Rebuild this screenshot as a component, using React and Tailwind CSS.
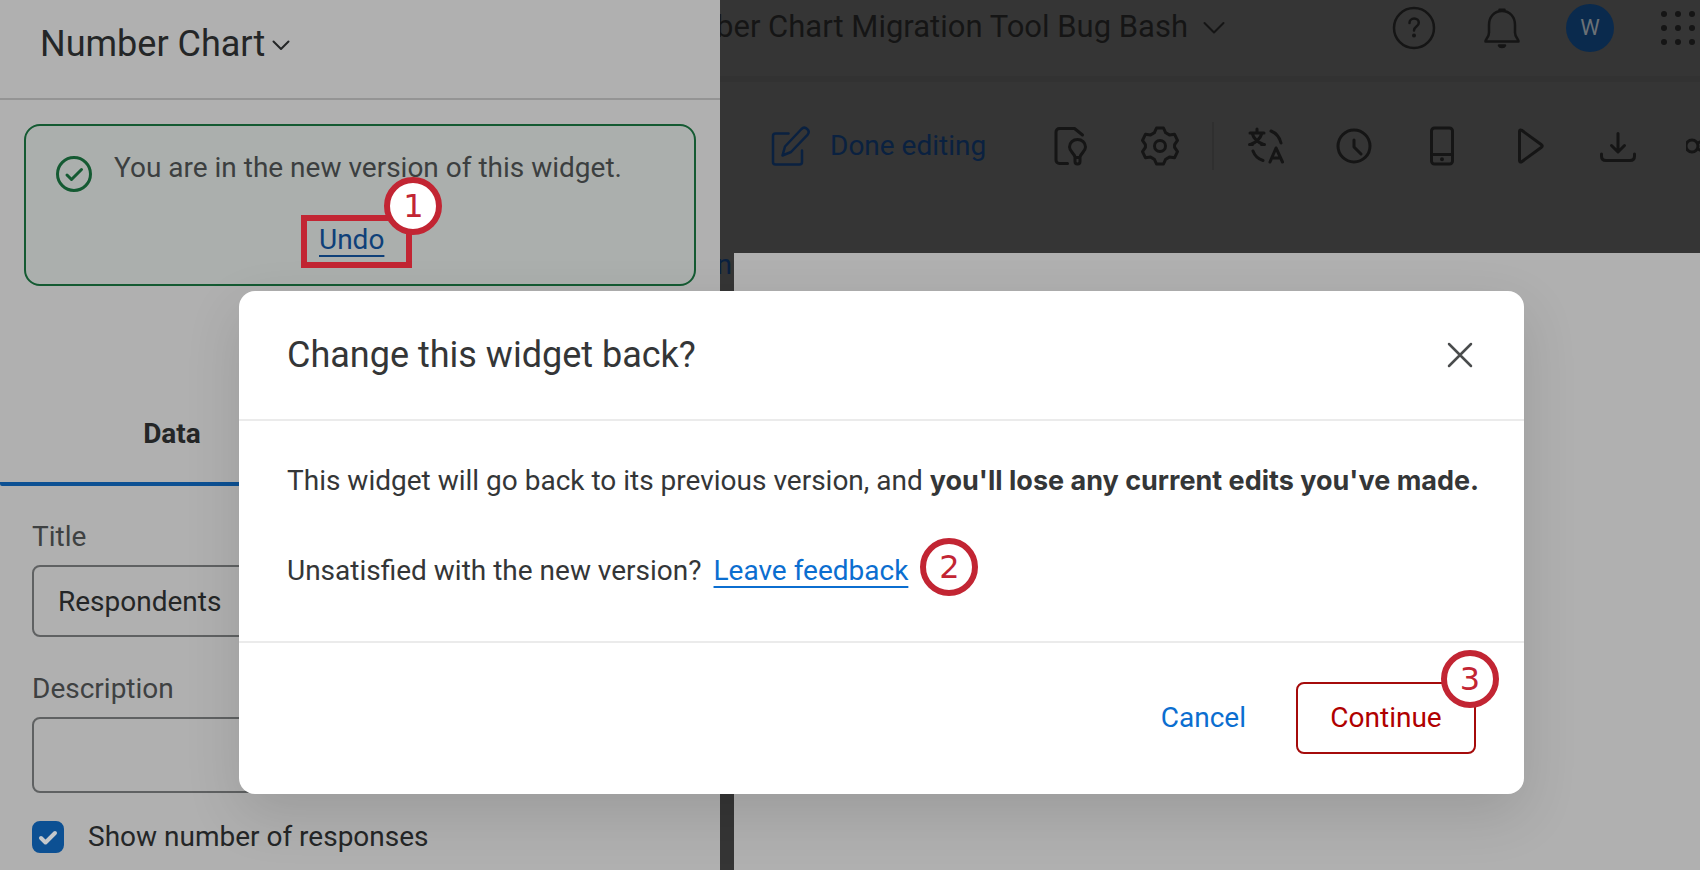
import React, { useState } from 'react';

const Icon = ({ size = 40, width = 3, className = '', children }) => (
  <svg
    width={size}
    height={size}
    viewBox={`0 0 ${size} ${size}`}
    fill="none"
    stroke="currentColor"
    strokeWidth={width}
    strokeLinecap="round"
    strokeLinejoin="round"
    aria-hidden="true"
    className={`shrink-0 ${className}`}
  >
    {children}
  </svg>
);

const Marker = ({ number, className }) => (
  <span
    className={`flex h-[58px] w-[58px] items-center justify-center rounded-full border-6 border-[#c22533] bg-white font-['DejaVu_Sans',sans-serif] text-[32px] leading-none text-[#c22533] ${className}`}
  >
    {number}
  </span>
);

const tools = [
  {
    label: 'Translate',
    icon: (
      <>
        <path d="M4 7h14M11 3v4M6 7c1.500 5 6 9.500 11.500 11.500M16 7c-1.500 5-6 9.500-11.500 11.500M3.500 18.500h3M15.500 18.500h3" />
        <path d="M25 5c5 2 8.500 6 10 12M7 25c1.500 4 5 8 10 9.500M24 36l6-14 6.500 14M26.500 32h8" />
      </>
    ),
  },
  {
    label: 'History',
    icon: (
      <>
        <circle cx="20" cy="20" r="16" />
        <path d="M20 14v7l7 7" />
      </>
    ),
  },
  {
    label: 'Mobile preview',
    icon: (
      <>
        <rect x="9.5" y="2" width="21" height="36" rx="3" />
        <path d="M10 28.500h20" />
        <circle cx="20" cy="33.3" r="1.2" fill="currentColor" strokeWidth="1.5" />
      </>
    ),
  },
  {
    label: 'Preview',
    icon: <path d="M9.500 5.500v29c0 1.500 1 2 2.200 1.200L31.500 21.200c1-.8 1-1.600 0-2.400L11.700 4.300c-1.200-.8-2.200-.3-2.200 1.200z" />,
  },
  {
    label: 'Download',
    icon: <path d="M20 7.500v18M13.500 19.500l6.500 6.500 6.500-6.500M3.500 28v2c0 3 1.500 4.500 4.500 4.500h24c3 0 4.500-1.500 4.500-4.500v-2" />,
  },
  {
    label: 'Share',
    icon: (
      <>
        <circle cx="6" cy="20" r="6" />
        <path d="M12 17l16-9M12 23l16 9" />
      </>
    ),
  },
];

const ToolButton = ({ label, children }) => (
  <button type="button" aria-label={label} className="flex h-12 w-12 shrink-0 items-center justify-center">
    <Icon>{children}</Icon>
  </button>
);

const WidgetPanel = () => {
  const [title, setTitle] = useState('Respondents');
  const [description, setDescription] = useState('');
  const [showCount, setShowCount] = useState(true);

  return (
    <aside className="w-[720px] shrink-0 overflow-hidden bg-[#b0b0b0] text-[#242627]">
      <header className="flex h-[100px] items-center border-b-2 border-[#949494] pb-2.5 pl-10">
        <button type="button" className="flex items-center gap-1.5 text-[36px]">
          Number Chart
          <Icon size={20} width={2} className="mt-0.5">
            <path d="M2.500 6.500l7.500 7.500 7.500-7.500" />
          </Icon>
        </button>
      </header>

      {/* Version notice */}
      <div className="mx-6 mt-6 flex gap-[22px] rounded-2xl border-2 border-[#145a32] bg-[#abafad] pt-[22px] pr-6 pb-6 pl-[30px]">
        <Icon size={36} className="mt-2 text-[#145a32]">
          <circle cx="18" cy="18" r="16.5" />
          <path d="M11 19l4.500 4.500L25.500 13.500" />
        </Icon>
        <div className="flex-1">
          <p className="text-[#3c3f40]">You are in the new version of this widget.</p>
          <div className="mt-8 pl-[205px]">
            <a
              href="#undo"
              className="relative inline-block text-[#0e4079] underline decoration-2 underline-offset-[6px] [text-decoration-skip-ink:none]"
            >
              Undo
              <span className="absolute -top-[5px] -right-7 -bottom-2 -left-[18px] border-6 border-[#c22533]">
                <Marker number={1} className="absolute -top-11 -right-9" />
              </span>
            </a>
          </div>
        </div>
      </div>

      <div role="tablist" className="mt-24 flex">
        <button
          type="button"
          role="tab"
          aria-selected="true"
          className="h-[104px] w-[344px] rounded-b-xs border-b-4 border-[#0c5093] pt-1 font-bold"
        >
          Data
        </button>
      </div>

      <form className="px-8 pt-[31px]">
        <label htmlFor="widget-title" className="mb-2 block text-[#3e4142]">Title</label>
        <input
          id="widget-title"
          type="text"
          value={title}
          onChange={(e) => setTitle(e.target.value)}
          className="mb-8 block h-[72px] w-full rounded-lg border-2 border-[#5f6162] px-6"
        />
        <label htmlFor="widget-description" className="mb-2 block text-[#3e4142]">Description</label>
        <input
          id="widget-description"
          type="text"
          value={description}
          onChange={(e) => setDescription(e.target.value)}
          className="mb-6 block h-[76px] w-full rounded-lg border-2 border-[#5f6162] px-6"
        />
        <label htmlFor="show-count" className="flex items-center gap-6">
          <span className="grid h-8 w-8 place-items-center">
            <input
              id="show-count"
              type="checkbox"
              checked={showCount}
              onChange={(e) => setShowCount(e.target.checked)}
              className="col-start-1 row-start-1 h-8 w-8 appearance-none rounded-lg border-2 border-[#5f6162] checked:border-[#0c5093] checked:bg-[#0c5093]"
            />
            {showCount && (
              <Icon size={20} width={4} className="pointer-events-none col-start-1 row-start-1 text-[#c4c8cc]">
                <path d="M3 11l4.500 4.500L17 6" />
              </Icon>
            )}
          </span>
          Show number of responses
        </label>
      </form>
    </aside>
  );
};

const Workspace = () => (
  <main className="flex min-w-0 flex-1 flex-col overflow-hidden bg-[#353535] text-[#151515]">
    <header className="flex h-[82px] shrink-0 items-start justify-between border-b-6 border-[#323232]">
      <button type="button" className="flex h-[54px] w-[506px] shrink-0 items-center justify-end gap-3.5 overflow-hidden text-[31px] whitespace-nowrap">
        Number Chart Migration Tool Bug Bash
        <Icon size={24} width={2}>
          <path d="M2.500 8l9.500 9.500L21.500 8" />
        </Icon>
      </button>
      <div className="flex h-14 shrink-0 items-center gap-10 pr-0.5">
        <button type="button" aria-label="Help" className="flex w-12 justify-center">
          <Icon size={44} width={2.5}>
            <circle cx="22" cy="22" r="20" />
            <path d="M17.500 17c0-2.500 2-4.500 4.700-4.500 2.600 0 4.600 1.800 4.600 4.300 0 4-4.800 3.600-4.800 7.700" />
            <circle cx="22" cy="29.5" r="1" fill="currentColor" strokeWidth="2" />
          </Icon>
        </button>
        <button type="button" aria-label="Notifications" className="flex w-12 justify-center">
          <Icon size={44} width={2.5}>
            <path d="M5.500 35.500h33c-.2-3-3.500-4-3.500-9V19c0-8-5-14-13-14S9 11 9 19v7.500c0 5-3.300 6-3.500 9z" />
            <path d="M19.500 3.800h5" />
            <path d="M19 39.500h6c-.8 2-5.200 2-6 0z" fill="currentColor" />
          </Icon>
        </button>
        <button
          type="button"
          aria-label="Account"
          className="h-12 w-12 rounded-full bg-[#0a2a4d] text-[22px] leading-none text-[#6b7176]"
        >
          W
        </button>
        <button type="button" aria-label="Apps" className="-mr-1 flex w-12 justify-center">
          <Icon size={34} width={0}>
            {[3, 17, 31].map((y) => [3, 17, 31].map((x) => (
              <circle key={`${x}-${y}`} cx={x} cy={y} r="3" fill="currentColor" />
            )))}
          </Icon>
        </button>
      </div>
    </header>

    <div className="flex h-[171px] shrink-0 items-start gap-7 pt-10 pl-[47px]">
      <div className="flex shrink-0 gap-10">
        <button type="button" className="flex h-12 w-[241px] items-center gap-[15px] pl-1 whitespace-nowrap text-[#0a2140]">
          <Icon size={44} width={2.5} className="text-[#0a2140]">
            <path d="M17.500 9.500H4.500c-1.500 0-2.500 1-2.500 2.500v26c0 1.500 1 2.500 2.500 2.500h24c1.500 0 2.500-1 2.500-2.500V26.500" />
            <path d="M11.500 31.500l2.500-9L30.500 5c3.500-3.500 9.500 1.500 6 5.800L20 28z" />
          </Icon>
          Done editing
        </button>
        <ToolButton label="Insights">
          <path d="M30.500 9l-8-6.500h-15C5.500 2.500 4 4 4 6v28c0 2 1.500 3.500 3.500 3.500h8" />
          <path d="M23 31.500c0-4-5.500-5.500-5.500-10.500 0-4.500 3.500-7.500 8-7.500s8 3 8 7.500c0 5-5.500 6.500-5.500 10.500z M23 31.500v4c0 3.300 5 3.300 5 0v-4" />
        </ToolButton>
        <ToolButton label="Settings">
          <path d="M16.500 2h7l2.200 4.800 3.700 2.100 5.200-.6 2.900 6-2.900 4.300v2.800l2.900 4.300-2.900 6-5.200-.6-3.700 2.100-2.200 4.800h-7l-2.200-4.800-3.700-2.100-5.200.6-2.900-6 2.900-4.300v-2.800l-2.900-4.300 2.900-6 5.200.6 3.700-2.100z" />
          <circle cx="20" cy="20" r="5.5" />
        </ToolButton>
      </div>
      <span className="h-12 w-0.5 shrink-0 bg-[#2f2f2f]" />
      <div className="flex shrink-0 gap-10">
        {tools.map((tool) => (
          <ToolButton key={tool.label} label={tool.label}>{tool.icon}</ToolButton>
        ))}
      </div>
    </div>

    <div className="flex flex-1">
      <span className="flex w-3.5 justify-end pr-0.5 leading-6 text-[#0a2140]">n</span>
      <section className="flex-1 bg-[#b0b0b0]" />
    </div>
  </main>
);

const ConfirmDialog = () => (
  <div className="absolute inset-0 pt-[291px] pr-44 pl-[239px]">
    <div
      role="dialog"
      aria-labelledby="dialog-title"
      className="rounded-2xl bg-white text-[#343637] shadow-[0_20px_56px_rgba(0,0,0,0.12)]"
    >
      <header className="flex h-[130px] items-center justify-between border-b-2 border-[#ebebeb] px-12">
        <h2 id="dialog-title" className="text-[36px]">Change this widget back?</h2>
        <button type="button" aria-label="Close" className="text-[#4a4c4d]">
          <Icon size={32} width={2.5}>
            <path d="M5 5l22 22M27 5L5 27" />
          </Icon>
        </button>
      </header>
      <div className="px-12 pt-10 pb-[50px] whitespace-nowrap">
        <p>
          This widget will go back to its previous version, and{' '}
          <strong className="font-['Inter',sans-serif] text-[27px]">you'll lose any current edits you've made.</strong>
        </p>
        <div className="mt-[50px] flex h-10 items-center">
          <span>Unsatisfied with the new version?</span>
          <a
            href="#feedback"
            className="ml-3 text-[#0b6ed0] underline decoration-2 underline-offset-[6px] [text-decoration-skip-ink:none]"
          >
            Leave feedback
          </a>
          <Marker number={2} className="mb-2 ml-3" />
        </div>
      </div>
      <footer className="flex justify-end gap-[50px] border-t-2 border-[#ebebeb] px-12 pt-[39px] pb-10">
        <button type="button" className="text-[#0b6ed0]">Cancel</button>
        <button type="button" className="relative h-[72px] w-[180px] rounded-lg border-2 border-[#a50b0b] text-[#b00000]">
          Continue
          <Marker number={3} className="absolute -top-[34px] -right-[25px]" />
        </button>
      </footer>
    </div>
  </div>
);

const App = () => (
  <div className="relative flex h-screen overflow-hidden font-['Roboto',sans-serif] text-[28px] leading-10">
    <WidgetPanel />
    <Workspace />
    <ConfirmDialog />
  </div>
);

export default App;
